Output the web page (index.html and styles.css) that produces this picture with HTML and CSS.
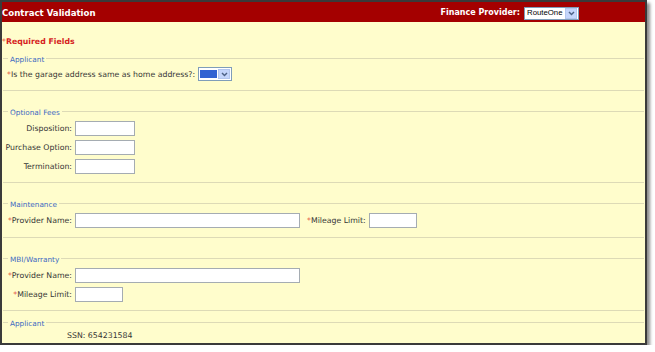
FILE: index.html
```html
<!DOCTYPE html>
<html>
<head>
<meta charset="utf-8">
<title>Contract Validation</title>
<link rel="stylesheet" href="styles.css">
</head>
<body>
<div class="window">
  <div class="titlebar">
    <span class="title">Contract Validation</span>
    <span class="provider">
      <span class="provider-label">Finance Provider:</span>
      <span class="hsel"><span class="hsel-val">RouteOne</span><span class="btn"><svg width="7" height="5" viewBox="0 0 7 5"><path d="M1 1 L3.5 3.6 L6 1" fill="none" stroke="#4d6185" stroke-width="1.4"/></svg></span></span>
    </span>
  </div>
  <div class="content">
    <div class="required"><span class="ast">*</span>Required Fields</div>

    <div class="group group--first">
      <div class="legend"><span>Applicant</span></div>
      <div class="rows">
        <div class="row">
          <span class="lbl-free"><span class="ast">*</span>Is the garage address same as home address?:</span>
          <span class="sel"><span class="sel-val"></span><span class="btn"><svg width="7" height="5" viewBox="0 0 7 5"><path d="M1 1 L3.5 3.6 L6 1" fill="none" stroke="#4d6185" stroke-width="1.4"/></svg></span></span>
        </div>
      </div>
    </div>

    <div class="group">
      <div class="legend"><span>Optional Fees</span></div>
      <div class="rows">
        <div class="row"><span class="lbl">Disposition:</span><span class="in w-s"></span></div>
        <div class="row"><span class="lbl">Purchase Option:</span><span class="in w-s"></span></div>
        <div class="row"><span class="lbl">Termination:</span><span class="in w-s"></span></div>
      </div>
    </div>

    <div class="group group--pad">
      <div class="legend"><span>Maintenance</span></div>
      <div class="rows">
        <div class="row">
          <span class="lbl"><span class="ast">*</span>Provider Name:</span><span class="in w-l"></span>
          <span class="lbl-inline"><span class="ast">*</span>Mileage Limit:</span><span class="in w-m"></span>
        </div>
      </div>
    </div>

    <div class="group group--close">
      <div class="legend"><span>MBI/Warranty</span></div>
      <div class="rows">
        <div class="row"><span class="lbl"><span class="ast">*</span>Provider Name:</span><span class="in w-l"></span></div>
        <div class="row"><span class="lbl"><span class="ast">*</span>Mileage Limit:</span><span class="in w-m"></span></div>
      </div>
    </div>

    <div class="group group--last">
      <div class="legend"><span>Applicant</span></div>
      <div class="rows">
        <div class="row row--text"><span class="ssn">SSN: 654231584</span></div>
      </div>
    </div>
  </div>
</div>
</body>
</html>
```

FILE: styles.css
```css
body {
  margin: 0;
  background: #ffffff;
  font-family: "DejaVu Sans", Verdana, sans-serif;
}

.window {
  width: 643px;
  height: 341px;
  border: 2px solid #3a3a3a;
  background: #fffdcc;
  box-shadow: 3px 3px 3px rgba(0, 0, 0, 0.45);
  overflow: hidden;
  display: flex;
  flex-direction: column;
}

.titlebar {
  height: 20px;
  box-sizing: border-box;
  padding: 2px 66px 0 0;
  background: #a40000;
  color: #ffffff;
  font-weight: bold;
  display: flex;
  align-items: center;
  justify-content: space-between;
  flex-shrink: 0;
}

.title {
  font-size: 8.6px;
  line-height: 10px;
}

.provider {
  display: flex;
  align-items: center;
  gap: 4px;
}

.provider-label {
  font-size: 8px;
  line-height: 10px;
}

.hsel {
  width: 55px;
  height: 13px;
  box-sizing: border-box;
  border: 1px solid #7f9db9;
  background: #ffffff;
  display: flex;
  align-items: center;
  justify-content: space-between;
  padding: 0 1px 0 2px;
}

.hsel-val {
  font: normal 7.8px/10px "Liberation Sans", Arial, sans-serif;
  color: #000000;
}

.btn {
  width: 12px;
  height: 11px;
  box-sizing: border-box;
  background: #c4d5fb;
  border: 1px solid #b3c6ee;
  display: flex;
  align-items: center;
  justify-content: center;
}

.content {
  display: flex;
  flex-direction: column;
}

.required {
  margin: 14px 0 10px 0;
  font-size: 7.8px;
  line-height: 12px;
  font-weight: bold;
  color: #d61f1f;
}

.ast {
  color: #e0392f;
  font-weight: normal;
}

.group {
  margin: 0 1px 20px 1px;
  border-bottom: 1px solid #dddab6;
  padding-bottom: 8px;
}

.group--pad {
  padding-bottom: 9px;
}

.group--close {
  margin-bottom: 11px;
}

.group--last {
  border-bottom: none;
  padding-bottom: 0;
  margin-bottom: 0;
}

.legend {
  display: flex;
  height: 10px;
  gap: 2px;
  color: #416ac2;
  font-size: 7.3px;
}

.group--first .legend {
  height: 9px;
}

.group--last .legend {
  height: 8px;
}

.legend::before,
.legend::after {
  content: "";
  height: 0;
  border-top: 1px solid #dddab6;
}

.legend::before {
  width: 5px;
}

.legend::after {
  flex: 1;
}

.legend span {
  line-height: 9px;
  margin-top: -3px;
}

.rows {
  display: flex;
  flex-direction: column;
  gap: 4px;
}

.row {
  display: flex;
  align-items: center;
  height: 15px;
  font-size: 7.8px;
  color: #363636;
  white-space: nowrap;
}

.row--text {
  height: 10px;
}

.lbl {
  width: 69px;
  text-align: right;
  margin-right: 3px;
}

.lbl-free {
  margin: 0 3px 0 4px;
}

.lbl-inline {
  margin: 0 3px 0 7px;
}

.ssn {
  margin-left: 64px;
}

.in {
  height: 15px;
  box-sizing: border-box;
  border: 1px solid #a5acb2;
  background: #ffffff;
}

.w-s { width: 60px; }
.w-l { width: 225px; }
.w-m { width: 48px; }

.sel {
  align-self: flex-start;
  width: 34px;
  height: 14px;
  box-sizing: border-box;
  border: 1px solid #7f9db9;
  background: #ffffff;
  padding: 1px;
  display: flex;
  gap: 1px;
}

.sel-val {
  flex: 1;
  margin: 1px 0;
  background: #3162d2;
}

.sel .btn {
  height: 10px;
}
```
